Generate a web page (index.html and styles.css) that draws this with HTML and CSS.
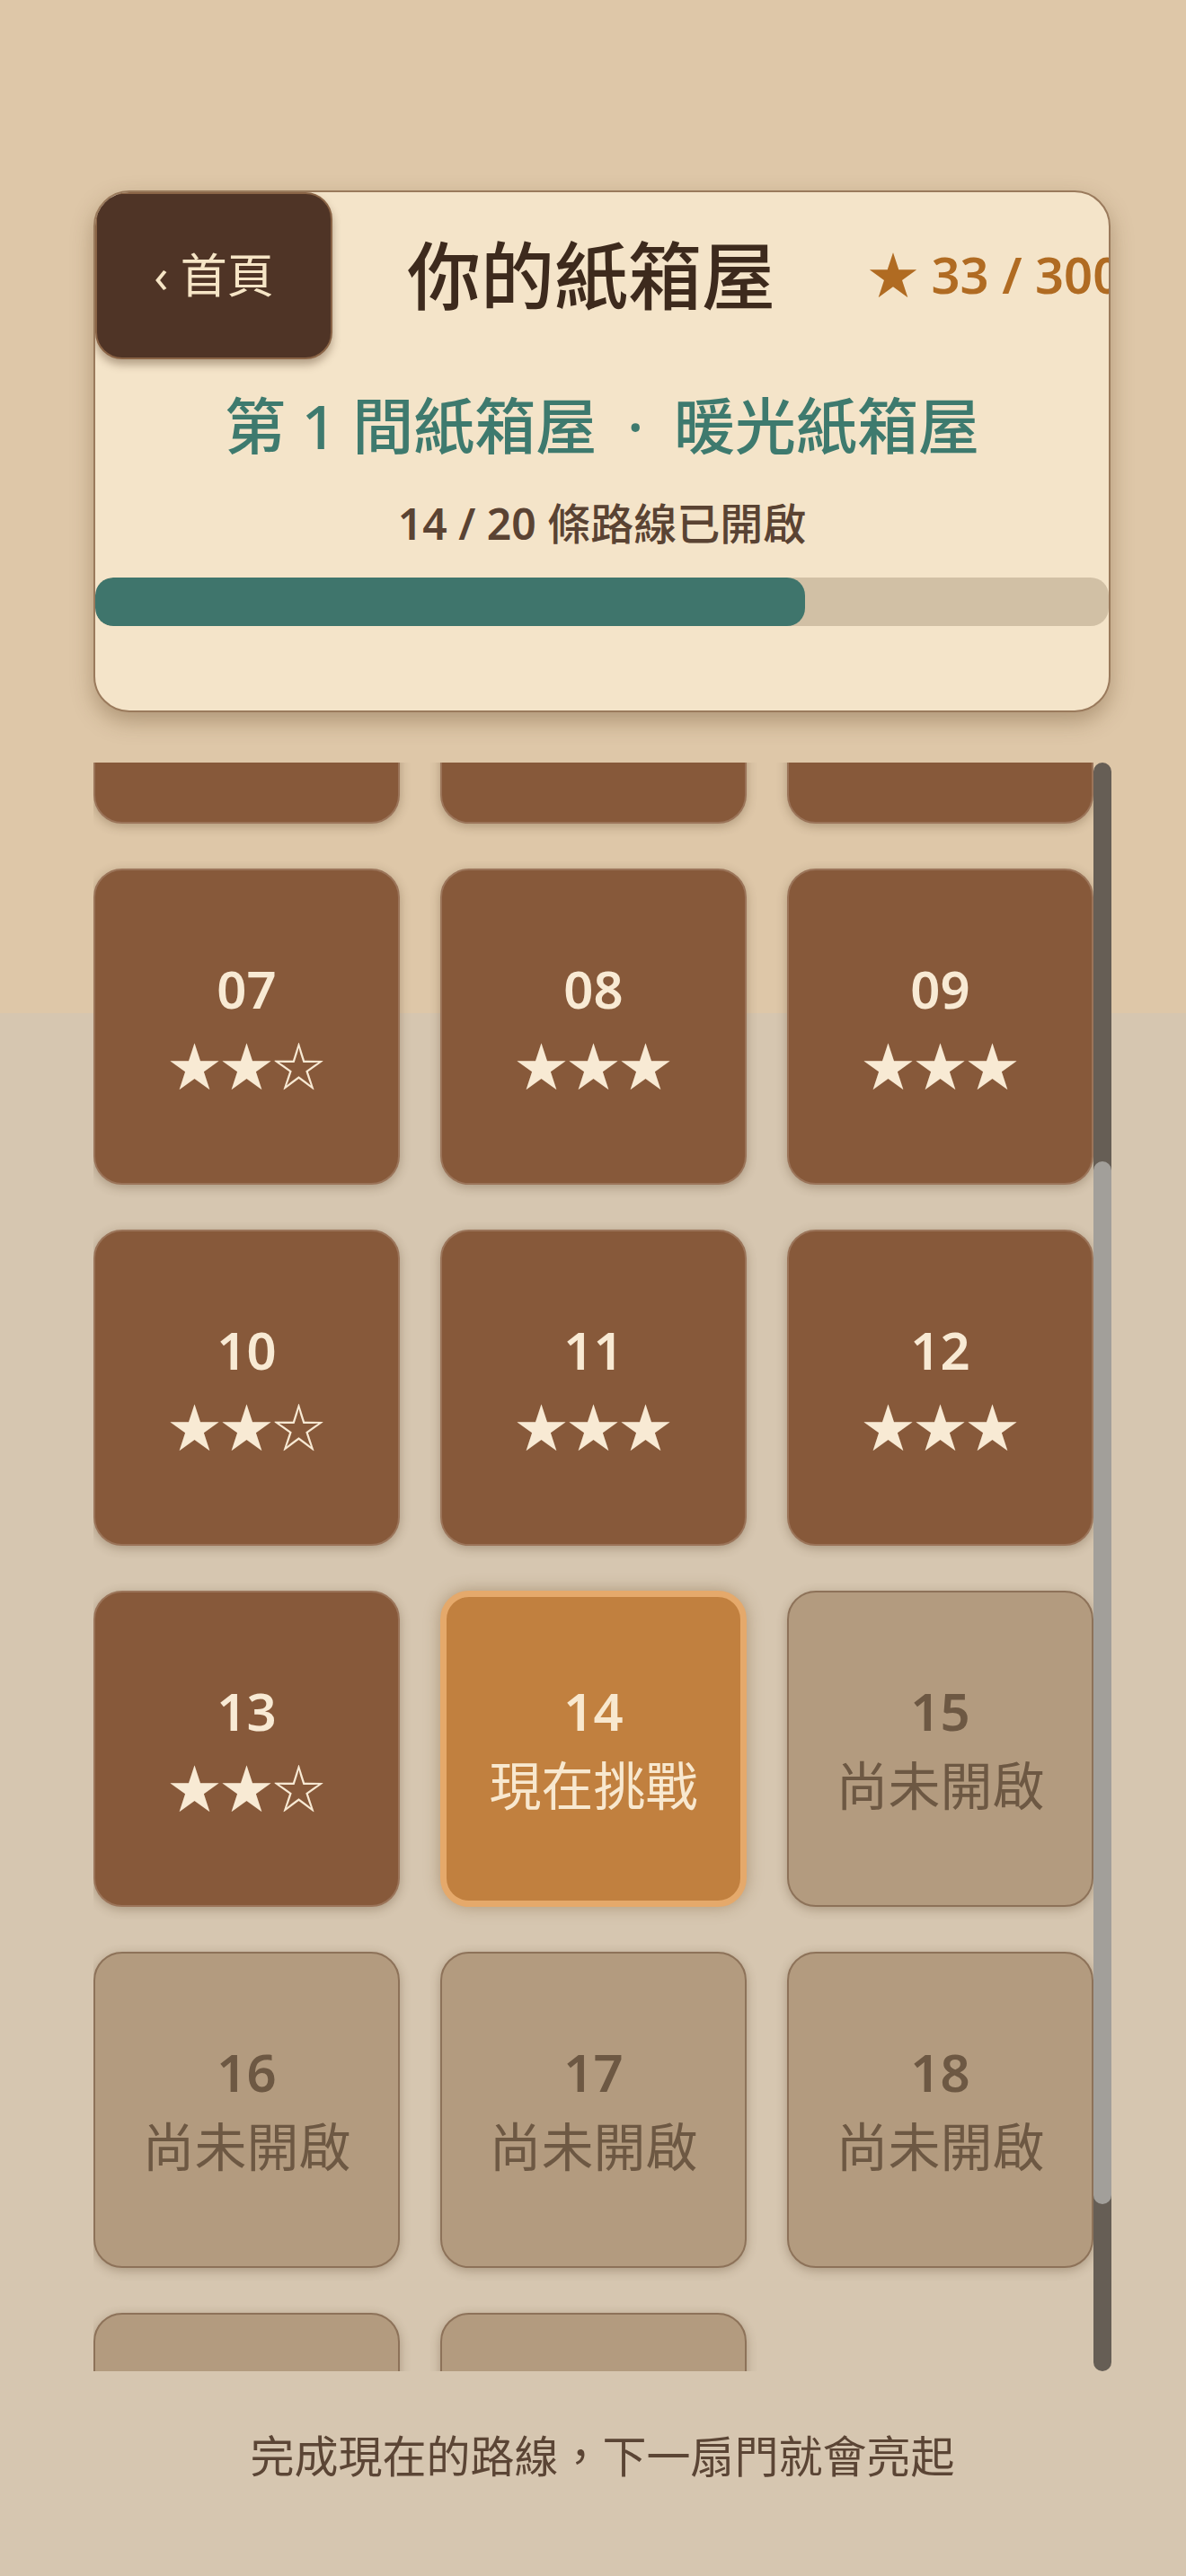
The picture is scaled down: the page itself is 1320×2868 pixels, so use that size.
FILE: index.html
```html
<!DOCTYPE html>
<html lang="zh-Hant">
<head>
<meta charset="UTF-8">
<meta name="viewport" content="width=device-width, initial-scale=1.0">
<title>你的紙箱屋</title>
<link rel="stylesheet" href="styles.css">
</head>
<body>
  <main class="page">
    <section class="house-card">
      <div class="house-head">
        <button class="back-btn" type="button">‹ 首頁</button>
        <h1 class="house-title">你的紙箱屋</h1>
        <div class="star-total"><span class="star">★</span> 33 / 300</div>
      </div>
      <h2 class="house-name">第 1 間紙箱屋 <span class="sep">·</span> 暖光紙箱屋</h2>
      <p class="route-count"><b>14 / 20</b> 條路線已開啟</p>
      <div class="progress">
        <div class="progress-fill" style="width: 70%"></div>
      </div>
    </section>

    <div class="levels-wrap">
      <div class="levels" id="levels">
        <div class="level-grid" id="levelGrid">
          <!-- tiles are added by the script below -->
        </div>
      </div>
      <div class="scroll-track" id="track">
        <div class="scroll-thumb" id="thumb"></div>
      </div>
    </div>

    <p class="hint">完成現在的路線，下一扇門就會亮起</p>
  </main>

  <script>
    // stars earned per cleared route
    var stars = [3, 2, 3, 2, 3, 2, 2, 3, 3, 2, 3, 3, 2];
    var current = 14;
    var total = 20;

    var grid = document.getElementById('levelGrid');
    for (var i = 1; i <= total; i++) {
      var num = i < 10 ? '0' + i : '' + i;
      var tile = document.createElement('div');
      if (i < current) {
        var s = stars[i - 1];
        tile.className = 'tile done';
        tile.innerHTML = '<span class="tile-num">' + num + '</span>' +
          '<span class="tile-stars">' + '★★★'.slice(0, s) + '☆☆☆'.slice(0, 3 - s) + '</span>';
      } else if (i === current) {
        tile.className = 'tile current';
        tile.innerHTML = '<span class="tile-num">' + num + '</span><span class="tile-label">現在挑戰</span>';
      } else {
        tile.className = 'tile locked';
        tile.innerHTML = '<span class="tile-num">' + num + '</span><span class="tile-label">尚未開啟</span>';
      }
      grid.appendChild(tile);
    }

    // keep the current route in view and draw the scroll bar to match
    var levels = document.getElementById('levels');
    var track = document.getElementById('track');
    var thumb = document.getElementById('thumb');

    function updateThumb() {
      var view = levels.clientHeight;
      var full = levels.scrollHeight;
      var trackH = track.clientHeight;
      var thumbH = Math.round(trackH * view / full);
      var top = Math.round(levels.scrollTop / (full - view) * (trackH - thumbH));
      thumb.style.height = thumbH + 'px';
      thumb.style.marginTop = top + 'px';
    }

    levels.scrollTop = 686;
    levels.addEventListener('scroll', updateThumb);
    updateThumb();
  </script>
</body>
</html>
```

FILE: styles.css
```css
html {
  background: #d6c6b0;
}

body {
  margin: 0;
  font-family: "Noto Sans", "Noto Sans CJK TC", sans-serif;
  background: linear-gradient(#dec7a8 0, #dec7a8 1128px, #d6c6b0 1128px) no-repeat;
  min-height: 2868px;
}

.page {
  width: 1133px;
  margin-left: 104px;
  padding-top: 212px;
}

/* header card */
.house-card {
  width: 1132px;
  box-sizing: border-box;
  background: #f4e4c9;
  border: 2px solid #9a7a5c;
  border-radius: 40px;
  overflow: hidden;
  padding-bottom: 94px;
  box-shadow: 0 10px 24px rgba(90, 60, 30, 0.35);
  text-align: center;
}

.house-head {
  display: grid;
  grid-template-columns: 264px 1fr 268px;
  align-items: center;
  height: 186px;
}

.back-btn {
  width: 264px;
  height: 186px;
  box-sizing: border-box;
  padding: 0 0 8px;
  background: #4f3426;
  color: #f6e5c6;
  border: 2px solid #8a6446;
  border-radius: 30px;
  font-family: inherit;
  font-size: 52px;
  box-shadow: 0 6px 10px rgba(60, 35, 15, 0.35);
  cursor: pointer;
}

.house-title {
  margin: 0;
  padding: 0 20px 10px 0;
  font-size: 82px;
  font-weight: 500;
  color: #3d2a1d;
}

.star-total {
  white-space: nowrap;
  text-align: left;
  padding-bottom: 10px;
  font-size: 56px;
  font-weight: 600;
  color: #b06b22;
}

.star {
  font-family: "Noto Sans CJK TC", sans-serif;
  font-weight: 400;
}

.house-name {
  margin: 30px 0 0;
  font-size: 68px;
  line-height: 1.3;
  font-weight: 500;
  color: #3e7a6e;
}

.sep {
  margin: 0 16px;
}

.route-count {
  margin: 34px 0 0;
  font-size: 48px;
  line-height: 1.3;
  font-weight: 500;
  color: #5a4333;
}

.route-count b {
  font-weight: 600;
}

.progress {
  margin-top: 28px;
  height: 54px;
  background: #d1c0a5;
  border-radius: 20px;
  overflow: hidden;
}

.progress-fill {
  height: 100%;
  background: #3f756c;
  border-radius: 20px;
}

/* route tiles */
.levels-wrap {
  display: flex;
  margin-top: 56px;
  height: 1791px;
}

.levels {
  width: 1113px;
  height: 100%;
  overflow: hidden;
}

.scroll-track {
  width: 20px;
  height: 100%;
  background: #665e55;
  border-radius: 10px;
}

.scroll-thumb {
  width: 20px;
  background: #a29f9a;
  border-radius: 10px;
}

.level-grid {
  display: grid;
  grid-template-columns: repeat(3, 341px);
  grid-auto-rows: 352px;
  column-gap: 45px;
  row-gap: 50px;
}

.tile {
  box-sizing: border-box;
  display: flex;
  flex-direction: column;
  align-items: center;
  justify-content: center;
  gap: 13px;
  border: 2px solid;
  border-radius: 32px;
  box-shadow: 0 3px 12px rgba(70, 45, 20, 0.3);
}

.tile-num {
  font-size: 58px;
  line-height: 70px;
  font-weight: 600;
}

.tile-label {
  font-size: 58px;
  line-height: 70px;
}

.tile-stars {
  font-family: "Noto Sans CJK TC", sans-serif;
  font-size: 58px;
  line-height: 70px;
}

.done {
  background: #87593a;
  border-color: #9b7459;
  color: #f8ead4;
}

.current {
  background: #c1803f;
  border: 7px solid #e5a96b;
  color: #f8e8cf;
  box-shadow: 0 0 18px rgba(110, 80, 40, 0.4);
}

.locked {
  background: #b39b7f;
  border-color: #8d7259;
  color: #6d5843;
}

.hint {
  margin: 60px 0 0;
  text-align: center;
  font-size: 49px;
  line-height: 1.4;
  color: #5b4535;
}
```
